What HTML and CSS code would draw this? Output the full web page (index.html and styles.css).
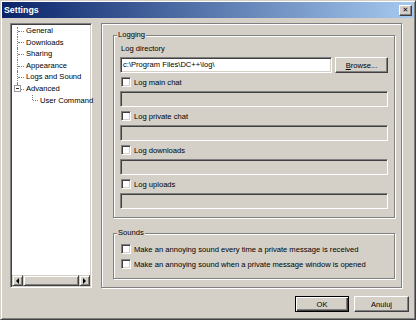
FILE: index.html
```html
<!DOCTYPE html>
<html lang="en">
<head>
  <meta charset="UTF-8">
  <title>Settings</title>
  <link rel="stylesheet" href="styles.css">
</head>
<body>
  <div class="window">
    <div class="titlebar">
      <span class="title">Settings</span>
      <span class="close">&#x2715;</span>
    </div>

    <div class="content">
      <div class="tree">
        <ul class="nodes">
          <li class="node first">General</li>
          <li class="node">Downloads</li>
          <li class="node">Sharing</li>
          <li class="node">Appearance</li>
          <li class="node">Logs and Sound</li>
          <li class="node last"><span class="toggle"></span>Advanced</li>
          <li class="node child">User Command</li>
        </ul>
        <div class="hscroll">
          <span class="sbtn"><span class="arrow left"></span></span>
          <span class="thumb"></span>
          <span class="sbtn"><span class="arrow right"></span></span>
        </div>
      </div>

      <div class="page">
        <fieldset class="group logging">
          <legend>Logging</legend>
          <div class="label-row">Log directory</div>
          <div class="dir-row">
            <div class="edit">c:\Program Files\DC++\log\</div>
            <button class="btn browse" type="button"><u>B</u>rowse...</button>
          </div>
          <label class="check"><span class="box"></span>Log main chat</label>
          <div class="edit disabled"></div>
          <label class="check"><span class="box"></span>Log private chat</label>
          <div class="edit disabled"></div>
          <label class="check"><span class="box"></span>Log downloads</label>
          <div class="edit disabled"></div>
          <label class="check"><span class="box"></span>Log uploads</label>
          <div class="edit disabled"></div>
        </fieldset>

        <fieldset class="group sounds">
          <legend>Sounds</legend>
          <label class="check"><span class="box"></span>Make an annoying sound every time a private message is received</label>
          <label class="check second"><span class="box"></span>Make an annoying sound when a private message window is opened</label>
        </fieldset>
      </div>
    </div>

    <div class="buttons">
      <button class="btn default" type="button">OK</button>
      <button class="btn" type="button">Anuluj</button>
    </div>
  </div>
</body>
</html>
```

FILE: styles.css
```css
body {
  margin: 0;
  background: #d4d0c8;
  color: #000;
  font-family: "Liberation Sans", Arial, sans-serif;
  font-size: 7.6px;
}

.window {
  width: 416px;
  height: 320px;
  box-sizing: border-box;
  padding: 1px;
  border: 1px solid;
  border-color: #d4d0c8 #404040 #404040 #d4d0c8;
  box-shadow: inset 1px 1px #fff, inset -1px -1px #808080;
  background: #d4d0c8;
  display: flex;
  flex-direction: column;
}

.titlebar {
  height: 16px;
  display: flex;
  align-items: center;
  justify-content: space-between;
  padding: 0 2px 0 2px;
  background: linear-gradient(to right, #0a246a, #a6caf0);
}

.title {
  color: #fff;
  font-weight: bold;
  font-size: 8.8px;
}

.close {
  width: 11px;
  height: 9px;
  border: 1px solid;
  border-color: #fff #404040 #404040 #fff;
  box-shadow: inset -1px -1px #808080;
  background: #d4d0c8;
  display: flex;
  align-items: center;
  justify-content: center;
  font-family: "DejaVu Sans", sans-serif;
  font-size: 7px;
  font-weight: bold;
  line-height: 1;
}

.content {
  display: flex;
  height: 265px;
  margin-top: 5px;
  padding-left: 8px;
}

/* tree view */

.tree {
  width: 82px;
  box-sizing: border-box;
  padding: 1px;
  border: 1px solid;
  border-color: #808080 #fff #fff #808080;
  box-shadow: inset 1px 1px #404040, inset -1px -1px #d4d0c8;
  background: #fff;
  display: flex;
  flex-direction: column;
}

.nodes {
  flex: 1;
  list-style: none;
  margin: 0;
  padding: 0;
}

.node {
  position: relative;
  height: 11.6px;
  line-height: 11.6px;
  padding-left: 14px;
  white-space: nowrap;
}

.node::before {
  content: "";
  position: absolute;
  left: 5px;
  top: 0;
  bottom: 0;
  border-left: 1px dotted #808080;
}

.node::after {
  content: "";
  position: absolute;
  left: 6px;
  top: 50%;
  width: 6px;
  border-top: 1px dotted #808080;
}

.node.first::before {
  top: 2px;
}

.node.last::before {
  bottom: 50%;
}

.node.child {
  padding-left: 28px;
}

.node.child::before {
  left: 20px;
  bottom: 50%;
}

.node.child::after {
  left: 21px;
  width: 5px;
}

.toggle {
  position: absolute;
  left: 2px;
  top: 2px;
  width: 7px;
  height: 7px;
  box-sizing: border-box;
  border: 1px solid #9a9a9a;
  background: #fff;
  z-index: 1;
}

.toggle::after {
  content: "";
  position: absolute;
  left: 1px;
  right: 1px;
  top: 2px;
  border-top: 1px solid #333;
}

.hscroll {
  height: 11px;
  display: flex;
}

.sbtn,
.thumb {
  box-sizing: border-box;
  border: 1px solid;
  border-color: #d4d0c8 #404040 #404040 #d4d0c8;
  box-shadow: inset 1px 1px #fff, inset -1px -1px #808080;
  background: #d4d0c8;
}

.sbtn {
  width: 11px;
  display: flex;
  align-items: center;
  justify-content: center;
}

.thumb {
  flex: 1;
}

.arrow {
  width: 0;
  height: 0;
  border-top: 3px solid transparent;
  border-bottom: 3px solid transparent;
}

.arrow.left {
  border-right: 3px solid #000;
}

.arrow.right {
  border-left: 3px solid #000;
}

/* settings page */

.page {
  width: 301px;
  margin-left: 9px;
  box-sizing: border-box;
  padding: 5px 6px 0 11px;
  border: 1px solid #808080;
  box-shadow: inset 1px 1px #fff, 1px 1px #fff;
}

.group {
  margin: 0;
  min-width: 0;
  padding: 2px 6px 8px 6px;
  border: 1px solid #808080;
  box-shadow: inset 1px 1px #fff, 1px 1px #fff;
}

.group legend {
  margin-left: -3px;
  padding: 0 1px;
  line-height: 12px;
  background: #d4d0c8;
}

.label-row {
  height: 12px;
  line-height: 12px;
  padding-left: 1px;
}

.dir-row {
  display: flex;
  gap: 3px;
  margin-top: 2px;
}

.edit {
  height: 16px;
  box-sizing: border-box;
  padding-left: 2px;
  border: 1px solid;
  border-color: #808080 #fff #fff #808080;
  box-shadow: inset 1px 1px #404040, inset -1px -1px #d4d0c8;
  background: #fff;
  line-height: 14px;
  white-space: nowrap;
}

.dir-row .edit {
  flex: 1;
}

.edit.disabled {
  margin-top: 2px;
  background: #d4d0c8;
}

.check {
  display: flex;
  align-items: center;
  gap: 3px;
  height: 14px;
  margin-top: 2px;
  padding-left: 1px;
  white-space: nowrap;
}

.box {
  width: 10px;
  height: 10px;
  box-sizing: border-box;
  border: 1px solid;
  border-color: #808080 #fff #fff #808080;
  box-shadow: inset 1px 1px #404040, inset -1px -1px #d4d0c8;
  background: #fff;
}

.sounds {
  margin-top: 9px;
  padding-top: 1px;
  padding-bottom: 7px;
}

.sounds .second {
  margin-top: 1px;
}

/* buttons */

.btn {
  height: 16px;
  box-sizing: border-box;
  padding: 0;
  border: 1px solid;
  border-color: #fff #404040 #404040 #fff;
  box-shadow: inset -1px -1px #808080;
  background: #d4d0c8;
  color: #000;
  font: inherit;
}

.browse {
  width: 53px;
}

.buttons {
  display: flex;
  justify-content: flex-end;
  gap: 5px;
  margin-top: 8px;
  padding-right: 5px;
}

.buttons .btn {
  width: 55px;
}

.btn.default {
  width: 54px;
  border-color: #000;
  box-shadow: inset 1px 1px #fff, inset -1px -1px #404040, inset -2px -2px #808080;
}
```
